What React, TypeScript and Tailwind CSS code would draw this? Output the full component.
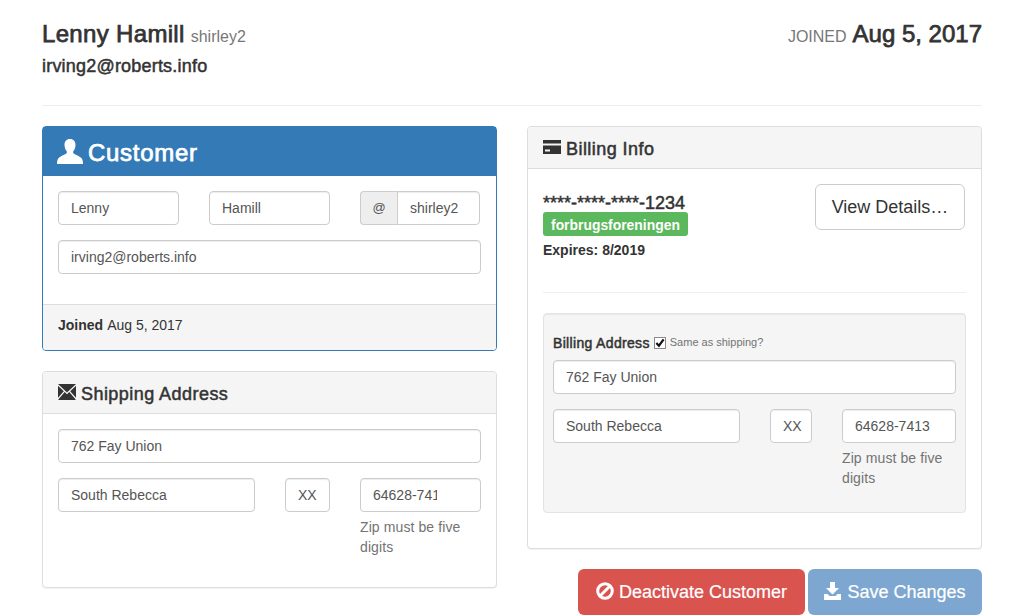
const medium = "[-webkit-text-stroke:0.5px]";
const mediumLarge = "[-webkit-text-stroke:0.75px]";

function UserIcon() {
  return (
    <svg width="26" height="25" viewBox="0 0 26 25" fill="currentColor" className="-mt-[3px] shrink-0">
      <path d="M13 0C9.300 0 7.500 2.500 7.500 5.800c0 2.700 1 5 2 6.300.7 1 .5 2.100-.5 2.700C6.700 16.200 3 17.500 1.400 19.300.5 20.400 0 22.200 0 25h26c0-2.800-.5-4.600-1.400-5.700-1.600-1.800-5.300-3.100-7.600-4.500-1-.6-1.200-1.700-.5-2.700 1-1.300 2-3.600 2-6.300C18.500 2.500 16.700 0 13 0z" />
    </svg>
  );
}

function EnvelopeIcon() {
  return (
    <svg width="18" height="16" viewBox="0 0 18 16" fill="currentColor" className="-mt-[3px] shrink-0">
      <path d="M0 0h18L9 8.500 0 0z" />
      <path d="M0 1.700v12.100l5.800-6.600L0 1.700z" />
      <path d="M18 1.700v12.100l-5.800-6.600L18 1.700z" />
      <path d="M6.700 8.100 9 10.300l2.300-2.200 6.400 7.300-.4.600H.7l-.4-.6 6.400-7.300z" />
    </svg>
  );
}

function CardIcon() {
  return (
    <svg width="18" height="14" viewBox="0 0 18 14" fill="currentColor" className="-mt-[3px] shrink-0">
      <path d="M0 0h18v3.500H0z" />
      <path fillRule="evenodd" d="M0 5.500h18V14H0V5.500zM2 9.500v2h5v-2H2z" />
    </svg>
  );
}

function BanIcon() {
  return (
    <svg width="18" height="18" viewBox="0 0 18 18" fill="none" stroke="currentColor" strokeWidth="3" className="-mt-[2px] shrink-0">
      <circle cx="9" cy="9" r="7.300" />
      <path d="M4 14 14 4" />
    </svg>
  );
}

function DownloadIcon() {
  return (
    <svg width="17" height="18" viewBox="0 0 17 18" fill="currentColor" className="-mt-[3px] shrink-0">
      <path d="M6 0h5v6h4l-6.500 6.500L2 6h4V0z" />
      <path d="M0 12h3.500l2 2h6l2-2H17v6H0v-6z" />
    </svg>
  );
}

function Field({ value, className = "" }: { value: string; className?: string }) {
  return (
    <input
      readOnly
      value={value}
      className={`h-[34px] w-full min-w-0 rounded border border-[#ccc] bg-white pl-3 text-sm text-[#555] shadow-[inset_0_1px_1px_rgba(0,0,0,0.075)] outline-none ${className}`}
    />
  );
}

function HelpText() {
  return <p className="mt-[5px] leading-[20px] tracking-[0.1px] text-[#737373]">Zip must be five digits</p>;
}

function Panel({ icon, title, children }: { icon: React.ReactNode; title: string; children: React.ReactNode }) {
  return (
    <div className="rounded border border-[#ddd] bg-white shadow-[0_1px_1px_rgba(0,0,0,0.05)]">
      <div className="flex h-[42px] items-center gap-[5px] rounded-t-[3px] border-b border-[#ddd] bg-[#f5f5f5] px-[15px] pt-[2px] text-[#333]">
        {icon}
        <span className={`text-lg tracking-[0.45px] ${medium}`}>{title}</span>
      </div>
      {children}
    </div>
  );
}

export default function App() {
  return (
    <div className="mx-auto w-[940px] font-['Liberation_Sans',Arial,sans-serif] text-sm text-[#333]">
      <header className="flex h-[106px] justify-between border-b border-[#eee] pt-[19px]">
        <div>
          <div className="flex items-baseline gap-[6px]">
            <h1 className={`text-2xl leading-[30px] tracking-[0.33px] ${mediumLarge}`}>Lenny Hamill</h1>
            <small className="text-base text-[#777]">shirley2</small>
          </div>
          <p className={`mt-[7px] text-lg leading-[20px] tracking-[0.2px] ${medium}`}>irving2@roberts.info</p>
        </div>
        <div className="flex items-baseline gap-[6px]">
          <small className="text-base uppercase text-[#777]">Joined</small>
          <span className={`text-2xl leading-[30px] ${mediumLarge}`}>Aug 5, 2017</span>
        </div>
      </header>

      <main className="mt-5 grid grid-cols-[455px_455px] gap-x-[30px]">
        <div className="flex flex-col gap-5">
          <div className="rounded border border-[#337ab7] bg-white">
            <div className="flex h-[49px] items-center gap-[5px] bg-[#337ab7] px-[14px] pt-[2px] text-white">
              <UserIcon />
              <span className={`text-2xl tracking-[0.7px] ${mediumLarge}`}>Customer</span>
            </div>
            <div className="flex flex-col gap-[15px] px-[15px] pt-[15px] pb-[30px]">
              <div className="grid grid-cols-3 gap-x-[30px]">
                <Field value="Lenny" />
                <Field value="Hamill" />
                <div className="mr-px flex">
                  <span className="flex h-[34px] w-[37px] shrink-0 items-center justify-center rounded-l border border-r-0 border-[#ccc] bg-[#eee] text-[13px] text-[#555]">
                    @
                  </span>
                  <Field value="shirley2" className="rounded-l-none" />
                </div>
              </div>
              <Field value="irving2@roberts.info" />
            </div>
            <div className="flex h-[46px] items-center gap-1 rounded-b-[3px] border-t border-[#ddd] bg-[#f5f5f5] px-[15px] pb-[6px]">
              <b>Joined</b> Aug 5, 2017
            </div>
          </div>

          <Panel icon={<EnvelopeIcon />} title="Shipping Address">
            <div className="flex h-[173px] flex-col gap-[15px] p-[15px]">
              <Field value="762 Fay Union" />
              <div className="grid grid-cols-[197px_45px_121px] gap-x-[30px]">
                <Field value="South Rebecca" />
                <Field value="XX" className="pr-[6px]" />
                <div>
                  <Field value="64628-7413" className="pr-[43px]" />
                  <HelpText />
                </div>
              </div>
            </div>
          </Panel>
        </div>

        <div>
          <Panel icon={<CardIcon />} title="Billing Info">
            <div className="flex h-[379px] flex-col px-[15px] pt-[15px]">
              <div className="flex h-[109px] justify-between border-b border-[#eee]">
                <div className="pt-[10px]">
                  <div className={`text-lg leading-[18px] ${medium}`}>****-****-****-1234</div>
                  <span className="block w-fit rounded-[3px] bg-[#5cb85c] px-2 pt-1 pb-[2px] text-[13.900px] leading-[18px] font-bold text-white">
                    forbrugsforeningen
                  </span>
                  <div className="mt-1 font-bold">Expires: 8/2019</div>
                </div>
                <button className="mr-px h-[46px] w-[150px] rounded-md border border-[#ccc] bg-white text-lg text-[#333]">
                  View Details…
                </button>
              </div>
              <div className="mt-5 flex h-[200px] flex-col rounded border border-[#e3e3e3] bg-[#f5f5f5] px-[9px] pt-[19px] shadow-[inset_0_1px_1px_rgba(0,0,0,0.05)]">
                <div className="flex h-[20px] items-center">
                  <span className={`tracking-[0.33px] ${medium}`}>Billing Address</span>
                  <span className="mx-[4px] flex h-[12px] w-[12px] items-center justify-center border border-[#8a8a8a] bg-white">
                    <svg width="10" height="10" viewBox="0 0 11 11" fill="none" stroke="#111" strokeWidth="2.400">
                      <path d="M1.500 5.500 4.300 8.500 9.500 1.500" />
                    </svg>
                  </span>
                  <span className="text-[11px] text-[#737373]">Same as shipping?</span>
                </div>
                <div className="mt-[7px] flex flex-col gap-[15px]">
                  <Field value="762 Fay Union" />
                  <div className="grid grid-cols-[187px_42px_114px] gap-x-[30px]">
                    <Field value="South Rebecca" />
                    <Field value="XX" className="pr-[6px]" />
                    <div>
                      <Field value="64628-7413" />
                      <HelpText />
                    </div>
                  </div>
                </div>
              </div>
            </div>
          </Panel>
          <div className="mt-5 flex justify-end gap-[3px]">
            <button className="flex h-[46px] w-[227px] items-center justify-center gap-[5px] rounded-md bg-[#d9534f] text-lg text-white [-webkit-text-stroke:0.2px]">
              <BanIcon />
              Deactivate Customer
            </button>
            <button className="flex h-[46px] w-[174px] items-center justify-center gap-[6px] rounded-md bg-[#7da7d0] text-lg text-white [-webkit-text-stroke:0.2px]">
              <DownloadIcon />
              Save Changes
            </button>
          </div>
        </div>
      </main>
    </div>
  );
}
